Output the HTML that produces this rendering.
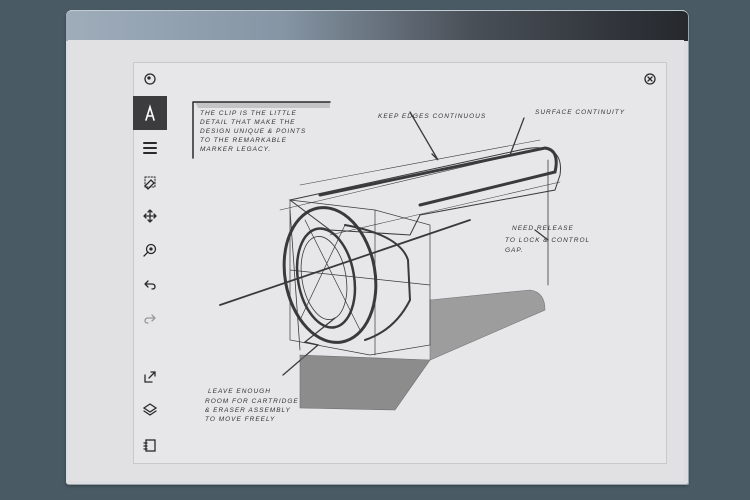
<!DOCTYPE html>
<html><head><style>
html,body{margin:0;padding:0;}
body{width:750px;height:500px;background:#495a64;position:relative;overflow:hidden;font-family:"Liberation Sans",sans-serif;}
.dev{position:absolute;left:66px;top:10px;width:622px;height:474px;background:#dcdde0;border-radius:6px 6px 2px 2px;box-shadow:1px 1px 0 #9aa3aa,0 2px 3px rgba(0,0,0,.3);}
.bez{position:absolute;left:0;top:0;width:622px;height:30px;border-radius:6px 6px 0 0;background:linear-gradient(90deg,#9fadbb 0%,#8595a4 35%,#4a5058 65%,#25282d 100%);border-top:1px solid #c5ccd3;}
.scr{position:absolute;left:2px;top:30px;width:616px;height:441px;background:#e1e1e3;}
.pan{position:absolute;left:133px;top:62px;width:532px;height:400px;background:#e7e7e9;border:1px solid #c9c9cc;}
.sel{position:absolute;left:133px;top:96px;width:34px;height:34px;background:#3c3c3e;}
svg{position:absolute;left:0;top:0;}
</style></head><body>
<div class="dev"><div class="bez"></div><div class="scr"></div></div>
<div class="pan"></div>
<div class="sel"></div>
<svg width="750" height="500" viewBox="0 0 750 500" fill="none" stroke="#2a2a2c" stroke-width="1.3" stroke-linecap="round">
<circle cx="150" cy="79" r="5"/><circle cx="149" cy="78" r="1" fill="#2a2a2c"/>
<path d="M146 120 L150 107 L154 120 M147 116 H153" stroke="#fff" stroke-width="1.6"/>
<path d="M144 143 H156 M144 148 H156 M144 153 H156" stroke-width="2"/>
<rect x="145" y="177" width="10" height="10" stroke-dasharray="1.5 1.5" stroke-width="1"/>
<path d="M145 186 L151 180 L154 183 L148 189Z"/>
<path d="M150 210 V222 M144 216 H156 M148 212 L150 210 L152 212 M148 220 L150 222 L152 220 M146 214 L144 216 L146 218 M154 214 L156 216 L154 218"/>
<circle cx="151" cy="249" r="4.5"/><path d="M148 252 L144 256"/><circle cx="151" cy="249" r="1" fill="#2a2a2c"/>
<path d="M145 284 H152 Q155 284 155 287 Q155 289 152 289 M145 284 L148 281 M145 284 L148 287"/>
<path d="M155 318 H148 Q145 318 145 321 Q145 323 148 323 M155 318 L152 315 M155 318 L152 321" stroke="#999"/>
<path d="M145 375 V382 H152 M149 378 L155 372 M151 372 H155 V376"/>
<path d="M150 404 L156 408 L150 412 L144 408Z M144 411 L150 415 L156 411"/>
<rect x="146" y="440" width="9" height="11"/><path d="M144 443 H147 M144 446 H147 M144 449 H147"/>
<circle cx="650" cy="79" r="5"/><path d="M648 77 L652 81 M652 77 L648 81"/>
<path d="M195 102 H330 V108 H198" fill="#c4c4c6" stroke="none"/>
<path d="M193 102 V158 M193 102 H330" stroke-width="1.5"/>
<g font-family="Liberation Sans" font-size="6.5" font-style="italic" fill="#333" stroke="none" letter-spacing="1">
<text x="200" y="115">THE CLIP IS THE LITTLE</text>
<text x="200" y="124">DETAIL THAT MAKE THE</text>
<text x="200" y="133">DESIGN UNIQUE &amp; POINTS</text>
<text x="200" y="142">TO THE REMARKABLE</text>
<text x="200" y="151">MARKER LEGACY.</text>
<text x="378" y="118">KEEP EDGES CONTINUOUS</text>
<text x="535" y="114">SURFACE CONTINUITY</text>
<text x="512" y="230">NEED RELEASE</text>
<text x="505" y="242">TO LOCK &amp; CONTROL</text>
<text x="505" y="252">GAP.</text>
<text x="208" y="393">LEAVE ENOUGH</text>
<text x="205" y="403">ROOM FOR CARTRIDGE</text>
<text x="205" y="412">&amp; ERASER ASSEMBLY</text>
<text x="205" y="421">TO MOVE FREELY</text>
</g>
<g stroke="#3a3a3c">
<path d="M410 112 L438 160 L432 154 M524 118 L510 155 M548 240 L535 230 M283 375 L318 345 L305 342 L335 318"/>
<path d="M290 200 L520 150 Q565 140 560 175 L555 190 L420 215 L410 235 L330 230 Z" stroke-width="1"/>
<path d="M280 210 L535 150 M300 185 L540 140 M330 235 L560 182" stroke-width=".6"/>
<path d="M320 195 L545 148 Q560 150 555 172 L420 205" stroke-width="3"/>
<ellipse cx="330" cy="275" rx="45" ry="68" transform="rotate(-10 330 275)" stroke-width="3"/>
<ellipse cx="326" cy="278" rx="28" ry="50" transform="rotate(-10 326 278)" stroke-width="2.5"/>
<ellipse cx="324" cy="278" rx="22" ry="42" transform="rotate(-10 324 278)" stroke-width=".8"/>
<path d="M290 200 L375 210 L430 225 L430 345 L370 355 L290 340 Z M375 210 L375 355 M290 270 L430 285 M305 220 L360 330 M345 225 L300 320" stroke-width=".7"/>
<path d="M345 225 Q400 235 408 260 L410 300 Q395 330 365 340" stroke-width="2"/>
<path d="M220 305 L470 220" stroke-width="1.8"/>
<path d="M300 355 L430 360 L395 410 L300 408 Z" fill="#666" stroke-width=".6" opacity=".7"/>
<path d="M430 300 L530 290 Q545 292 545 310 L430 360 Z" fill="#777" stroke-width=".6" opacity=".65"/>
<path d="M290 210 L300 350 M548 160 L548 285" stroke-width=".8"/>
</g>
</svg>
</body></html>
